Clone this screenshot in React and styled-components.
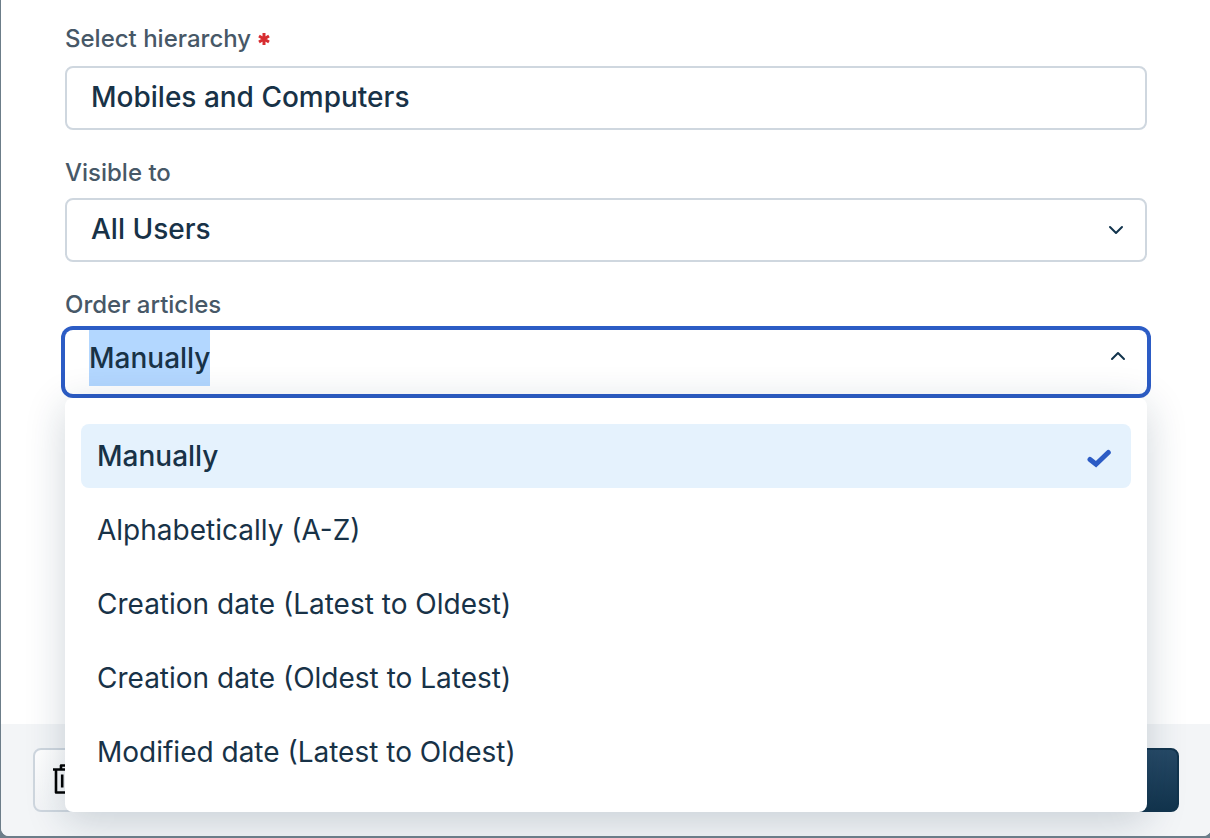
import React, { useEffect, useRef } from "react";
import styled, { createGlobalStyle, css } from "styled-components";

const Global = createGlobalStyle`
  * { box-sizing: border-box; }
  body {
    margin: 0;
    overflow-x: hidden;
    background: #6c7d89;
    color: #183247;
    font-family: Inter, "Liberation Sans", sans-serif;
  }
`;

const Panel = styled.form`
  display: flex;
  flex-direction: column;
  min-height: calc(100vh - 2px);
  margin: 0 -1px 2px 1px;
  background: #fff;
  border-radius: 0 0 8px 8px;
  overflow: hidden;
`;

const Fields = styled.div`
  flex: 1;
  display: flex;
  flex-direction: column;
  gap: 27px;
  padding: 23px 64px 0;
`;

const Field = styled.div`
  display: flex;
  flex-direction: column;
  position: relative;
  gap: ${(p) => (p.$required ? 11 : 9)}px;
`;

const Label = styled.label`
  display: flex;
  align-items: center;
  gap: 7px;
  font-size: 24px;
  line-height: 32px;
  font-weight: 500;
  color: #475867;
`;

const Control = styled.div`
  display: grid;
  align-items: center;
  height: 64px;
  border: 2px solid #cfd7df;
  border-radius: 8px;
  background: #fff;

  > * { grid-area: 1 / 1; }

  ${(p) =>
    p.$focused &&
    css`
      border: 0;
      padding-bottom: 8px;
      box-shadow: 0 0 0 4px #2c5cc5;
    `}
`;

const entry = css`
  width: 100%;
  height: 100%;
  min-width: 0;
  margin: 0;
  padding: 0 24px 2px;
  border: 0;
  border-radius: 6px;
  outline: none;
  background: transparent;
  color: inherit;
  font: 500 28px/56px Inter, "Liberation Sans", sans-serif;
`;

const TextInput = styled.input`
  ${entry}
`;

const ComboInput = styled.input`
  ${entry}
  field-sizing: content;
  width: auto;
  justify-self: start;
  margin-left: 24px;
  padding: 0;
  border-radius: 0;

  &:focus { background: #b3d7ff; }
  &::selection { background: #b3d7ff; color: #183247; }
`;

const Select = styled.select`
  ${entry}
  appearance: none;
`;

const Chevron = styled.svg`
  width: 24px;
  height: 24px;
  margin-right: 17px;
  justify-self: end;
  pointer-events: none;
  fill: none;
  stroke: #12344d;
  stroke-width: 2;
  stroke-linecap: round;
  stroke-linejoin: round;
`;

const Menu = styled.ul`
  position: absolute;
  top: calc(100% + 4px);
  left: 0;
  right: 0;
  z-index: 2;
  display: flex;
  flex-direction: column;
  gap: 10px;
  margin: 0;
  padding: 26px 16px 28px;
  list-style: none;
  border-radius: 8px;
  background: #fff;
  box-shadow: 0 8px 40px rgba(18, 52, 77, 0.2);
`;

const Option = styled.li`
  display: flex;
  align-items: center;
  justify-content: space-between;
  height: 64px;
  padding: 0 20px 0 16px;
  border-radius: 8px;
  font-size: 28px;
  font-weight: ${(p) => (p["aria-selected"] ? 500 : 400)};
  background: ${(p) => (p["aria-selected"] ? "#e5f2fd" : "transparent")};
`;

const Tick = styled.svg`
  width: 24px;
  height: 24px;
  fill: none;
  stroke: #2c5cc5;
  stroke-width: 5;
  stroke-linecap: round;
`;

const Footer = styled.footer`
  display: flex;
  justify-content: space-between;
  padding: 24px 32px;
  background: #f3f5f7;
`;

const Button = styled.button`
  display: flex;
  align-items: center;
  justify-content: center;
  height: 64px;
  padding: 0;
  border-radius: 8px;
`;

const DeleteButton = styled(Button)`
  width: 64px;
  border: 2px solid #cfd7df;
  background: linear-gradient(#fff, #f3f5f7);
  color: #000;
`;

const SaveButton = styled(Button)`
  width: 140px;
  border: 2px solid #12344d;
  background: linear-gradient(#264966, #12344d);
`;

const Star = styled.svg`
  width: 12px;
  height: 12px;
  stroke: #d72d30;
  stroke-width: 3;
`;

const options = [
  "Manually",
  "Alphabetically (A-Z)",
  "Creation date (Latest to Oldest)",
  "Creation date (Oldest to Latest)",
  "Modified date (Latest to Oldest)",
];

export default function App() {
  const order = useRef(null);
  useEffect(() => {
    order.current.focus();
    order.current.select();
  }, []);

  return (
    <>
      <Global />
      <Panel onSubmit={(e) => e.preventDefault()}>
        <Fields>
          <Field $required>
            <Label htmlFor="hierarchy">
              Select hierarchy
              <Star viewBox="0 0 12 12" aria-hidden="true">
                <path d="M6 0v12M1 3l10 6M11 3L1 9" />
              </Star>
            </Label>
            <Control>
              <TextInput id="hierarchy" required defaultValue="Mobiles and Computers" />
            </Control>
          </Field>
          <Field>
            <Label htmlFor="visible">Visible to</Label>
            <Control>
              <Select id="visible">
                <option>All Users</option>
              </Select>
              <Chevron viewBox="0 0 24 24" aria-hidden="true">
                <path d="M6 9l6 6 6-6" />
              </Chevron>
            </Control>
          </Field>
          <Field>
            <Label htmlFor="order">Order articles</Label>
            <Control $focused>
              <ComboInput
                id="order"
                ref={order}
                role="combobox"
                aria-expanded="true"
                aria-controls="order-list"
                defaultValue="Manually"
              />
              <Chevron viewBox="0 0 24 24" aria-hidden="true">
                <path d="M6 13l6-6 6 6" />
              </Chevron>
            </Control>
            <Menu id="order-list" role="listbox" aria-label="Order articles">
              {options.map((name, i) => (
                <Option key={name} role="option" aria-selected={i === 0}>
                  {name}
                  {i === 0 && (
                    <Tick viewBox="0 0 24 24" aria-hidden="true">
                      <path d="M3 15.500L9 20.200L21.300 8.500" />
                    </Tick>
                  )}
                </Option>
              ))}
            </Menu>
          </Field>
        </Fields>
        <Footer>
          <DeleteButton type="button" aria-label="Delete">
            <svg
              width="24"
              height="32"
              viewBox="0 0 24 32"
              fill="none"
              stroke="currentColor"
              strokeWidth="2.600"
              strokeLinejoin="round"
              aria-hidden="true"
            >
              <path d="M0 5.500h24M8 5.500V1.500h8v4M3 5.500v23h18v-23M9.200 10.500v13M14.800 10.500v13" />
            </svg>
          </DeleteButton>
          <SaveButton type="submit" aria-label="Save" />
        </Footer>
      </Panel>
    </>
  );
}
